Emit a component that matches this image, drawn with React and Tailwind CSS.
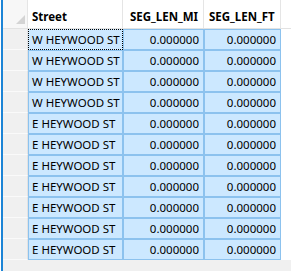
import React from "react";

const rows = [
  "W HEYWOOD ST",
  "W HEYWOOD ST",
  "W HEYWOOD ST",
  "W HEYWOOD ST",
  "E HEYWOOD ST",
  "E HEYWOOD ST",
  "E HEYWOOD ST",
  "E HEYWOOD ST",
  "E HEYWOOD ST",
  "E HEYWOOD ST",
  "E HEYWOOD ST",
];

export default function App() {
  return (
    <div
      className="w-[291px] h-[271px] bg-[#f0f0f0] flex overflow-hidden text-[11.5px] text-black"
      style={{ fontFamily: '"Noto Sans", "Open Sans", sans-serif' }}
    >
      <div className="w-[1px] bg-white shrink-0" />
      <div className="w-[2px] bg-[#1c84d6] shrink-0" />
      <div className="flex flex-col flex-1">
        {/* header */}
        <div className="flex h-[29px] bg-white border-b border-[#e2e2e2] shrink-0">
          <div className="w-[25px] border-r border-[#e5e5e5] bg-[#f7f7f7] relative">
            <svg className="absolute left-[13px] top-[15px]" width="9" height="9" viewBox="0 0 9 9">
              <polygon points="9,0 9,9 0,9" fill="#d4d4d4" />
            </svg>
          </div>
          <div className="w-[95px] border-r border-[#e5e5e5] flex items-center pl-[4px] pt-[5px] font-bold">Street</div>
          <div className="w-[81px] border-r border-[#e5e5e5] flex items-center pl-[7px] pt-[5px] font-bold whitespace-nowrap">SEG_LEN_MI</div>
          <div className="w-[77px] border-r border-[#e5e5e5] flex items-center pl-[5px] pt-[5px] font-bold whitespace-nowrap">SEG_LEN_FT</div>
          <div className="flex-1" />
        </div>
        {/* rows */}
        {rows.map((r, i) => (
          <div key={i} className="flex h-[21px] shrink-0">
            <div className="w-[25px] bg-[#f0f0f0] border-b border-[#fafafa] border-r border-r-[#e2e2e2]" />
            <div
              className={
                i === 0
                  ? "w-[95px] bg-[#cce8ff] border border-dotted border-black flex items-center pl-[3px] whitespace-nowrap overflow-hidden"
                  : "w-[95px] bg-[#cce8ff] border border-[#8cc2ee] flex items-center pl-[3px] whitespace-nowrap overflow-hidden"
              }
            >
              {r}
            </div>
            <div className="w-[81px] bg-[#cce8ff] border border-[#8cc2ee] flex items-center justify-end pr-[4px]">
              0.000000
            </div>
            <div className="w-[77px] bg-[#cce8ff] border border-[#8cc2ee] flex items-center justify-end pr-[4px]">
              0.000000
            </div>
            <div className="flex-1 bg-white" />
          </div>
        ))}
        <div className="flex-1 bg-[#f0f0f0]" />
      </div>
    </div>
  );
}
